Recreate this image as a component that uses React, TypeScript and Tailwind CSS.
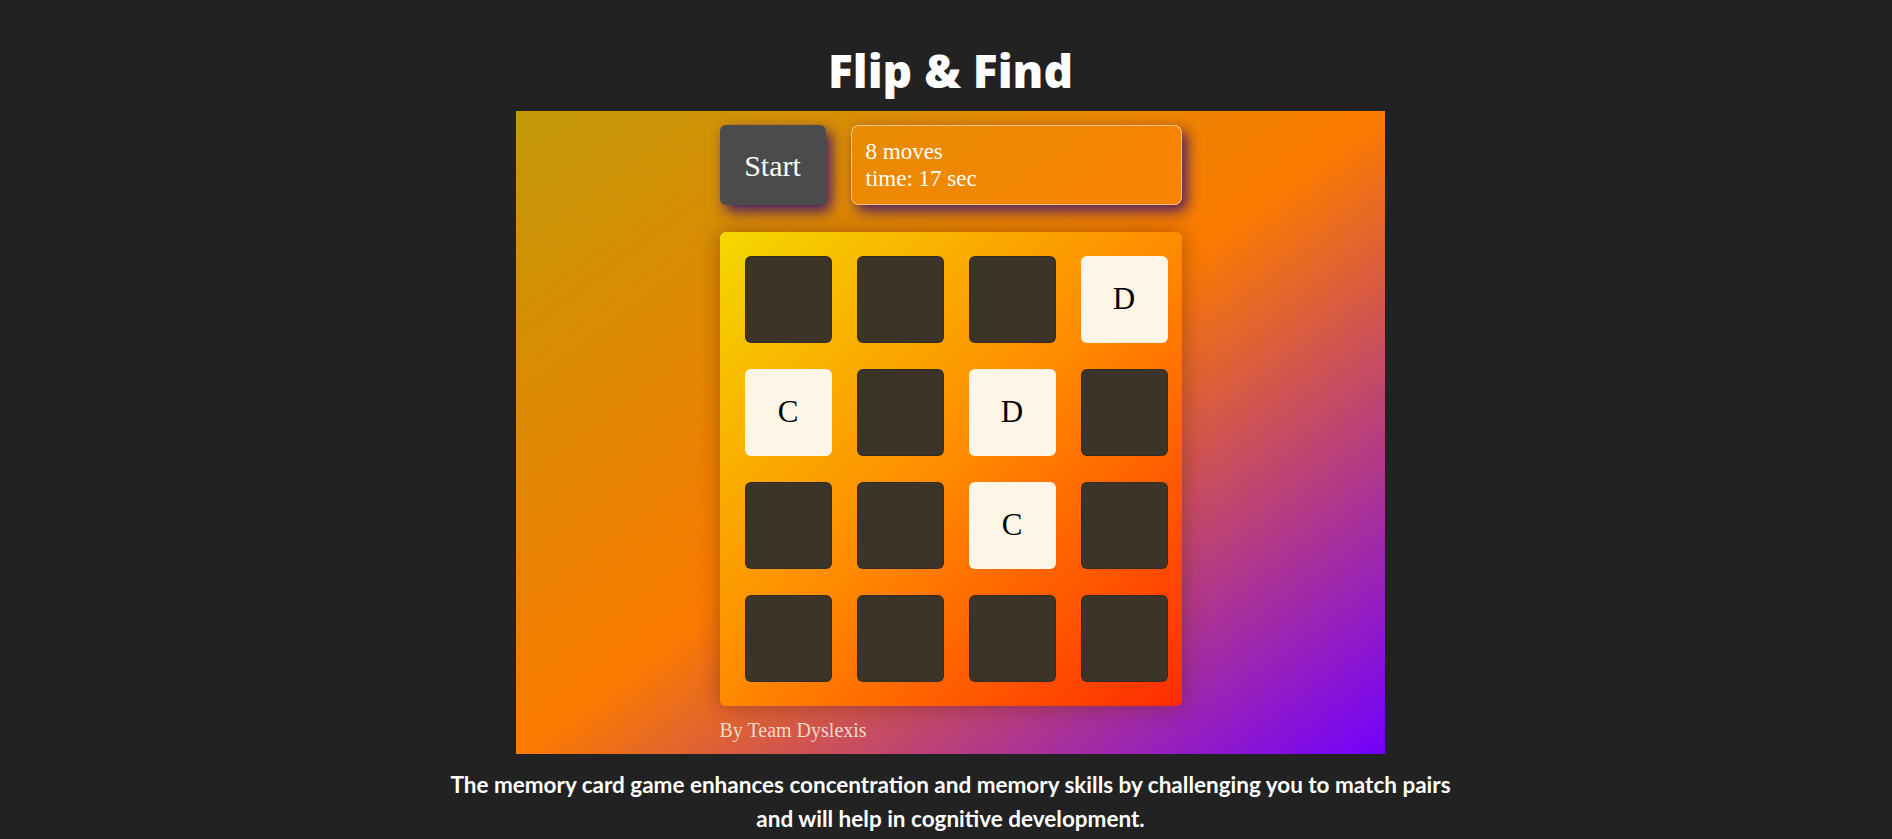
import React from 'react';

type Card = { letter: string; open: boolean };

const cards: Card[] = [
  { letter: 'A', open: false },
  { letter: 'B', open: false },
  { letter: 'E', open: false },
  { letter: 'D', open: true },
  { letter: 'C', open: true },
  { letter: 'F', open: false },
  { letter: 'D', open: true },
  { letter: 'G', open: false },
  { letter: 'H', open: false },
  { letter: 'A', open: false },
  { letter: 'C', open: true },
  { letter: 'B', open: false },
  { letter: 'E', open: false },
  { letter: 'F', open: false },
  { letter: 'G', open: false },
  { letter: 'H', open: false },
];

const App: React.FC = () => {
  return (
    <div className="min-h-screen bg-[#222222] pt-[47px] pb-6 pl-[9px]">
      {/* Title */}
      <h1 className="text-center text-white text-[46px] leading-none font-extrabold font-['Open_Sans',sans-serif] mb-[18px]">
        Flip &amp; Find
      </h1>

      {/* Game panel */}
      <div className="mx-auto w-[869px] bg-[linear-gradient(to_bottom_right,#c29a08,#fb7b00_50%,#7300ff)] pt-[14px] pb-[12px] font-['Liberation_Serif',serif]">
        <div className="mx-auto w-[462px]">
          <div className="flex gap-[25px]">
            <button className="w-[106px] h-[80px] rounded-[6px] bg-[#4b4b4b] text-white text-[30px] shadow-[5px_6px_14px_rgba(45,10,120,0.9)]">
              Start
            </button>
            <div className="flex-1 h-[80px] rounded-[8px] border border-white/50 bg-[#ff8a00]/40 flex flex-col justify-center px-[14px] text-white text-[23px] leading-[27px] shadow-[5px_6px_14px_rgba(45,10,120,0.85)]">
              <div>8 moves</div>
              <div>time: 17 sec</div>
            </div>
          </div>

          {/* Board */}
          <div className="mt-[27px] rounded-[6px] bg-[linear-gradient(135deg,#f4d800,#ff8a00_50%,#ff2c00)] pt-[24px] pb-[24px] pl-[25px] pr-[14px] grid grid-cols-[repeat(4,87px)] gap-x-[25px] gap-y-[26px] shadow-[0_0_22px_rgba(90,30,0,0.45)]">
            {cards.map((card, i) => (
              <div
                key={i}
                className={`w-[87px] h-[87px] rounded-[6px] flex items-center justify-center text-[31px] ${
                  card.open
                    ? 'bg-[#fdf6e6] text-black'
                    : 'bg-[#3c3429] border border-[#2e2820]/60'
                }`}
              >
                {card.open ? card.letter : ''}
              </div>
            ))}
          </div>

          <p className="mt-[13px] text-[20px] leading-[23px] text-[#ecdcc8]">By Team Dyslexis</p>
        </div>
      </div>

      {/* Description */}
      <p className="mx-auto mt-[14px] w-[1010px] text-center text-white text-[22.5px] leading-[34px] font-bold font-['Lato',sans-serif]">
        The memory card game enhances concentration and memory skills by challenging you to match pairs and will help in cognitive development.
      </p>
    </div>
  );
};

export default App;
